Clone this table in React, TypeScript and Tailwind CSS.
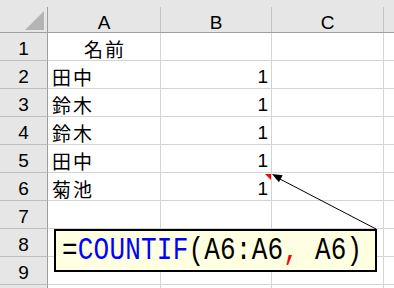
import React from "react";

const rows: { n: string; name: string; count: string; center?: boolean }[] = [
  { n: "1", name: "名前", count: "", center: true },
  { n: "2", name: "田中", count: "1" },
  { n: "3", name: "鈴木", count: "1" },
  { n: "4", name: "鈴木", count: "1" },
  { n: "5", name: "田中", count: "1" },
  { n: "6", name: "菊池", count: "1" },
  { n: "7", name: "", count: "" },
  { n: "8", name: "", count: "" },
  { n: "9", name: "", count: "" },
  { n: "", name: "", count: "" },
];

const latin = "font-['Liberation_Sans',Arial,sans-serif]";
const jp = "font-['Noto_Sans_CJK_JP','Noto_Sans',sans-serif]";

const HeaderCell = ({ label, last }: { label?: string; last?: boolean }) => (
  <div className="h-[33px] border-b border-[#9f9f9f] bg-[#e6e6e6]">
    <div
      className={`mt-[7px] flex h-[25px] items-end justify-center ${
        last ? "" : "border-r border-[#c3c3c3]"
      }`}
    >
      <span className={`${latin} text-[19px] leading-[18px] text-black`}>{label}</span>
    </div>
  </div>
);

const App = () => {
  return (
    <div className="relative h-[288px] w-[394px] overflow-hidden bg-white">
      <div className="grid grid-cols-[48px_113px_111px_112px_1fr]">
        {/* corner */}
        <div className="h-[33px] border-b border-[#9f9f9f] bg-[#e6e6e6]">
          <div className="mt-[7px] flex h-[25px] items-end justify-end border-r border-[#9f9f9f] pr-[2px] pb-[2px]">
            <svg width="20" height="19" viewBox="0 0 20 19">
              <polygon points="19,0 19,19 0,19" fill="#b4b4b4" />
            </svg>
          </div>
        </div>
        <HeaderCell label="A" />
        <HeaderCell label="B" />
        <HeaderCell label="C" />
        <HeaderCell last />

        {rows.map((r, i) => (
          <React.Fragment key={i}>
            <div className="flex h-[28px] justify-center border-r border-b border-r-[#9f9f9f] border-b-[#bdbdbd] bg-[#e6e6e6] pt-[4px]">
              <span className={`${latin} text-[19px] leading-[23px] text-black`}>{r.n}</span>
            </div>
            <div
              className={`flex h-[28px] border-r border-b border-[#d4d4d4] pt-[4px] ${
                r.center ? "justify-center pl-[2px]" : "pl-[4px]"
              }`}
            >
              <span className={`${jp} text-[19px] leading-[23px] tracking-[2px] text-black`}>{r.name}</span>
            </div>
            <div className="flex h-[28px] justify-end border-r border-b border-[#d4d4d4] pt-[4px] pr-[3px]">
              <span className={`${latin} text-[19px] leading-[23px] text-black`}>{r.count}</span>
            </div>
            <div className="h-[28px] border-r border-b border-[#d4d4d4]" />
            <div className="h-[28px] border-b border-[#d4d4d4]" />
          </React.Fragment>
        ))}
      </div>

      {/* comment indicator + arrow */}
      <svg className="pointer-events-none absolute inset-0" width="394" height="288" viewBox="0 0 394 288">
        <polygon points="265,174 271,174 271,180" fill="#ff0000" />
        <line x1="278" y1="178" x2="376" y2="229" stroke="#000" strokeWidth="1" />
        <polygon points="272,174 282.7,175.2 278.9,182.2" fill="#000" />
      </svg>

      {/* comment box */}
      <div className="absolute left-[54px] top-[229px] flex h-[43px] w-[323px] items-center border-2 border-black bg-[#ffffe1] pl-[6px]">
        <span className="inline-block origin-center scale-y-[1.2] whitespace-pre font-['Liberation_Mono',monospace] text-[26px] leading-none tracking-[0.2px] text-black">
          =<span className="text-[#0000ff]">COUNTIF</span>(A6:A6<span className="text-[#ff0000]">,</span> A6)
        </span>
      </div>
    </div>
  );
};

export default App;
